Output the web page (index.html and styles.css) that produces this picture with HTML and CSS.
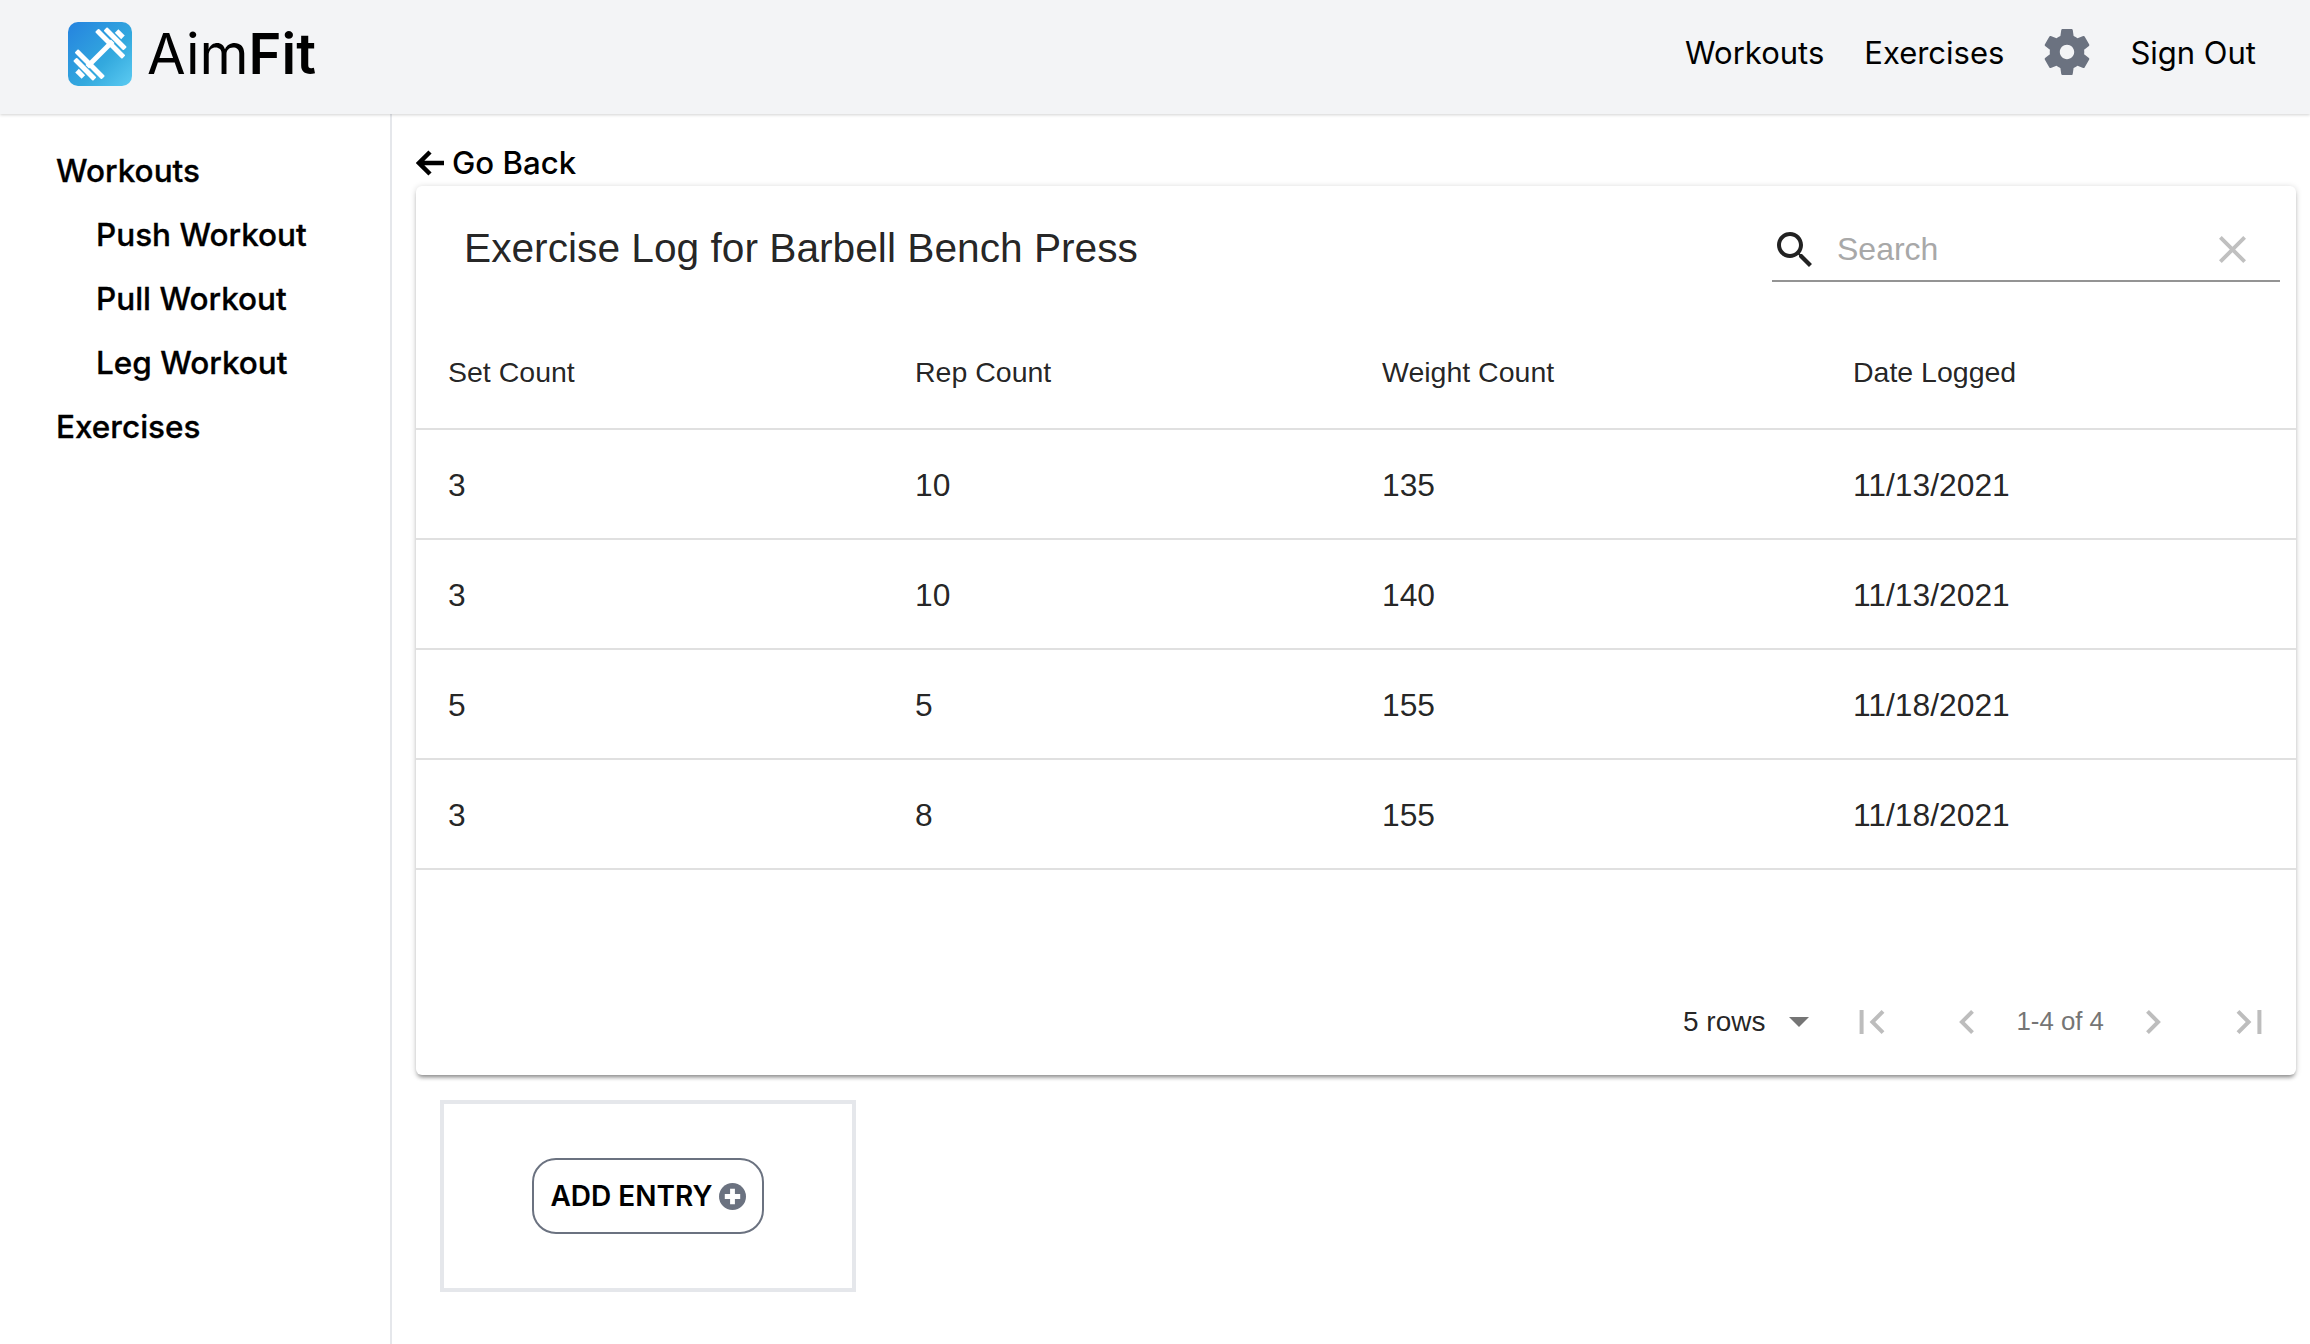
FILE: index.html
```html
<!DOCTYPE html>
<html lang="en">
<head>
<meta charset="utf-8">
<title>AimFit</title>
<link rel="stylesheet" href="styles.css">
</head>
<body>
<header class="topbar">
  <a class="brand">
    <svg class="logo" viewBox="0 0 64 64">
      <defs><linearGradient id="lg" x1="0" y1="0" x2="1" y2="1"><stop offset="0" stop-color="#2583df"/><stop offset=".6" stop-color="#33a9de"/><stop offset="1" stop-color="#5ccbf2"/></linearGradient></defs>
      <rect width="64" height="64" rx="10" fill="url(#lg)"/>
      <g fill="#fff" transform="rotate(-45 32 32)">
        <rect x="14" y="29.500" width="36" height="5"/>
        <rect x="15" y="13" width="5" height="38" rx="1"/>
        <rect x="8" y="18" width="5" height="28" rx="1"/>
        <rect x="1.500" y="27.500" width="5" height="9"/>
        <rect x="44" y="13" width="5" height="38" rx="1"/>
        <rect x="51" y="18" width="5" height="28" rx="1"/>
        <rect x="57.500" y="27.500" width="5" height="9"/>
      </g>
    </svg>
    <span class="brand-name">Aim<b>Fit</b></span>
  </a>
  <nav class="topnav">
    <a>Workouts</a>
    <a>Exercises</a>
    <svg class="gear" viewBox="2.4 2 19.2 20"><path d="M19.14 12.94c.04-.3.06-.61.06-.94 0-.32-.02-.64-.07-.94l2.03-1.58c.18-.14.23-.41.12-.61l-1.92-3.32c-.12-.22-.37-.29-.59-.22l-2.39.96c-.5-.38-1.03-.7-1.62-.94l-.36-2.54c-.04-.24-.24-.41-.48-.41h-3.84c-.24 0-.43.17-.47.41l-.36 2.54c-.59.24-1.13.57-1.62.94l-2.39-.96c-.22-.08-.47 0-.59.22L2.74 8.87c-.12.21-.08.47.12.61l2.03 1.58c-.05.3-.09.63-.09.94s.02.64.07.94l-2.03 1.58c-.18.14-.23.41-.12.61l1.92 3.32c.12.22.37.29.59.22l2.39-.96c.5.38 1.03.7 1.62.94l.36 2.54c.05.24.24.41.48.41h3.84c.24 0 .44-.17.47-.41l.36-2.54c.59-.24 1.13-.56 1.62-.94l2.39.96c.22.08.47 0 .59-.22l1.92-3.32c.12-.22.07-.47-.12-.61l-2.01-1.58zM12 15c-1.65 0-3-1.35-3-3s1.35-3 3-3 3 1.35 3 3-1.35 3-3 3z"/></svg>
    <a>Sign Out</a>
  </nav>
</header>
<div class="body-row">
  <aside class="sidebar">
    <a class="side-item">Workouts</a>
    <a class="side-item sub">Push Workout</a>
    <a class="side-item sub">Pull Workout</a>
    <a class="side-item sub">Leg Workout</a>
    <a class="side-item">Exercises</a>
  </aside>
  <main class="content">
    <a class="back">
      <svg class="back-icon" viewBox="0 0 28 28"><path d="M14 3 3 14l11 11M3 14h25" fill="none" stroke="#000" stroke-width="4.500"/></svg>
      Go Back
    </a>
    <section class="card">
      <div class="card-head">
        <h2 class="card-title">Exercise Log for Barbell Bench Press</h2>
        <div class="search">
          <svg class="search-icon" viewBox="3 3 17.5 17.5"><path d="M15.5 14h-.79l-.28-.27C15.41 12.59 16 11.11 16 9.5 16 5.91 13.09 3 9.5 3S3 5.91 3 9.5 5.91 16 9.5 16c1.61 0 3.09-.59 4.23-1.57l.27.28v.79l5 4.99L20.49 19l-4.99-5zm-6 0C7.01 14 5 11.99 5 9.5S7.01 5 9.5 5 14 7.01 14 9.5 11.99 14 9.5 14z"/></svg>
          <span class="search-text">Search</span>
          <svg class="clear-icon" viewBox="5 5 14 14"><path d="M19 6.41L17.59 5 12 10.59 6.41 5 5 6.41 10.59 12 5 17.59 6.41 19 12 13.41 17.59 19 19 17.59 13.41 12z"/></svg>
        </div>
      </div>
      <table class="log">
        <thead>
          <tr><th class="c1">Set Count</th><th class="c2">Rep Count</th><th class="c3">Weight Count</th><th>Date Logged</th></tr>
        </thead>
        <tbody>
          <tr><td>3</td><td>10</td><td>135</td><td>11/13/2021</td></tr>
          <tr><td>3</td><td>10</td><td>140</td><td>11/13/2021</td></tr>
          <tr><td>5</td><td>5</td><td>155</td><td>11/18/2021</td></tr>
          <tr><td>3</td><td>8</td><td>155</td><td>11/18/2021</td></tr>
        </tbody>
      </table>
      <div class="pager">
        <span class="rows">5 rows</span>
        <svg class="drop" viewBox="7 10 10 5"><path d="M7 10l5 5 5-5z"/></svg>
        <svg class="pg first" viewBox="6 6 12.41 12"><path d="M18.41 16.59L13.82 12l4.59-4.59L17 6l-6 6 6 6zM6 6h2v12H6z"/></svg>
        <svg class="pg prev" viewBox="8 6 7.41 12"><path d="M15.41 7.41L14 6l-6 6 6 6 1.41-1.41L10.83 12z"/></svg>
        <span class="count">1-4 of 4</span>
        <svg class="pg next" viewBox="8.59 6 7.41 12"><path d="M10 6L8.59 7.41 13.17 12l-4.58 4.59L10 18l6-6z"/></svg>
        <svg class="pg last" viewBox="5.59 6 12.41 12"><path d="M5.59 7.41L10.18 12l-4.59 4.59L7 18l6-6-6-6zM16 6h2v12h-2z"/></svg>
      </div>
    </section>
    <div class="add-box">
      <button class="add-btn">ADD ENTRY
        <svg class="plus" viewBox="0 0 28 28"><circle cx="14" cy="14" r="14"/><path d="M11.500 6h5v5.500H22v5h-5.500V22h-5v-5.500H6v-5h5.500z" fill="#fff"/></svg>
      </button>
    </div>
  </main>
</div>
</body>
</html>
```

FILE: styles.css
```css
* { box-sizing: border-box; }
html, body { margin: 0; height: 100%; }
body { width: 2310px; height: 1344px; overflow: hidden; background: #fff; color: #000; font-family: Inter, "Liberation Sans", sans-serif; display: flex; flex-direction: column; }

.topbar { height: 114px; flex: none; background: #f3f4f6; box-shadow: 0 1px 3px rgba(0,0,0,.18); display: flex; align-items: center; justify-content: space-between; padding: 0 54px 6px 68px; position: relative; }
.brand { display: flex; align-items: center; gap: 15px; }
.logo { width: 64px; height: 64px; display: block; }
.brand-name { font-size: 56px; line-height: 64px; font-weight: 400; }
.brand-name b { font-weight: 600; }
.topnav { display: flex; align-items: center; gap: 40px; font-size: 31px; line-height: 38px; padding-bottom: 2px; }
.gear { width: 46px; height: 48px; fill: #6b7280; display: block; margin-top: -3px; }

.body-row { flex: 1; display: flex; min-height: 0; }
.sidebar { width: 392px; flex: none; border-right: 2px solid #e5e7eb; padding: 25px 0 0 56px; display: flex; flex-direction: column; }
.side-item { height: 64px; line-height: 64px; font-size: 31.5px; font-weight: 500; -webkit-text-stroke: .3px #000; }
.side-item.sub { padding-left: 40px; }

.content { flex: 1; padding: 26px 14px 0 24px; min-width: 0; }
.back { display: flex; align-items: center; gap: 8px; height: 46px; font-size: 31.2px; font-weight: 500; }
.back-icon { width: 28px; height: 28px; display: block; }

.card { height: 889px; background: #fff; border-radius: 6px; box-shadow: 0 4px 4px -2px rgba(0,0,0,.4), 0 1px 6px rgba(0,0,0,.18); display: flex; flex-direction: column; font-family: "Liberation Sans", Arial, sans-serif; color: rgba(0,0,0,.87); }
.card-head { height: 124px; display: flex; align-items: center; justify-content: space-between; padding: 0 16px 0 48px; flex: none; }
.card-title { margin: 0; font-size: 40.7px; font-weight: 400; }
.search { width: 508px; height: 64px; margin-top: 4px; border-bottom: 2px solid #949494; display: flex; align-items: center; padding: 0 34px 0 5px; }
.search-icon { width: 35px; height: 35px; fill: #222; display: block; }
.search-text { flex: 1; padding-left: 25px; font-size: 32px; color: #a8a8a8; }
.clear-icon { width: 27px; height: 27px; fill: #c0c0c0; display: block; }

.log { width: 100%; border-collapse: collapse; table-layout: fixed; flex: none; }
.log th { height: 119px; padding: 6px 0 0 32px; text-align: left; font-size: 28.5px; font-weight: 400; border-bottom: 2px solid #e0e0e0; }
.log td { height: 110px; padding: 2px 0 0 32px; font-size: 31.8px; border-bottom: 2px solid #e0e0e0; }
.c1, .c2 { width: 467px; }
.c3 { width: 471px; }

.pager { flex: 1; display: flex; align-items: center; padding: 98px 0 0 0; position: relative; }
.rows { margin-left: 1267px; font-size: 28px; }
.drop { width: 20px; height: 10px; fill: #757575; margin-left: 24px; display: block; }
.pg { height: 24px; fill: #bdbdbd; display: block; }
.first { width: 26px; margin-left: 50px; }
.prev { width: 15px; margin-left: 74px; }
.count { margin-left: 42px; font-size: 25.8px; color: #757575; }
.next { width: 15px; margin-left: 42px; }
.last { width: 26px; margin-left: 75px; }

.add-box { width: 416px; height: 192px; margin: 25px 0 0 24px; border: 4px solid #e5e7eb; display: flex; align-items: center; justify-content: center; }
.add-btn { width: 232px; height: 76px; padding: 0; border: 2px solid #6b7280; border-radius: 24px; background: #fff; color: #000; font-family: Inter, sans-serif; font-size: 28px; font-weight: 600; display: flex; align-items: center; justify-content: center; gap: 6px; }
.plus { width: 27px; height: 27px; fill: #6b7280; display: block; }
```
